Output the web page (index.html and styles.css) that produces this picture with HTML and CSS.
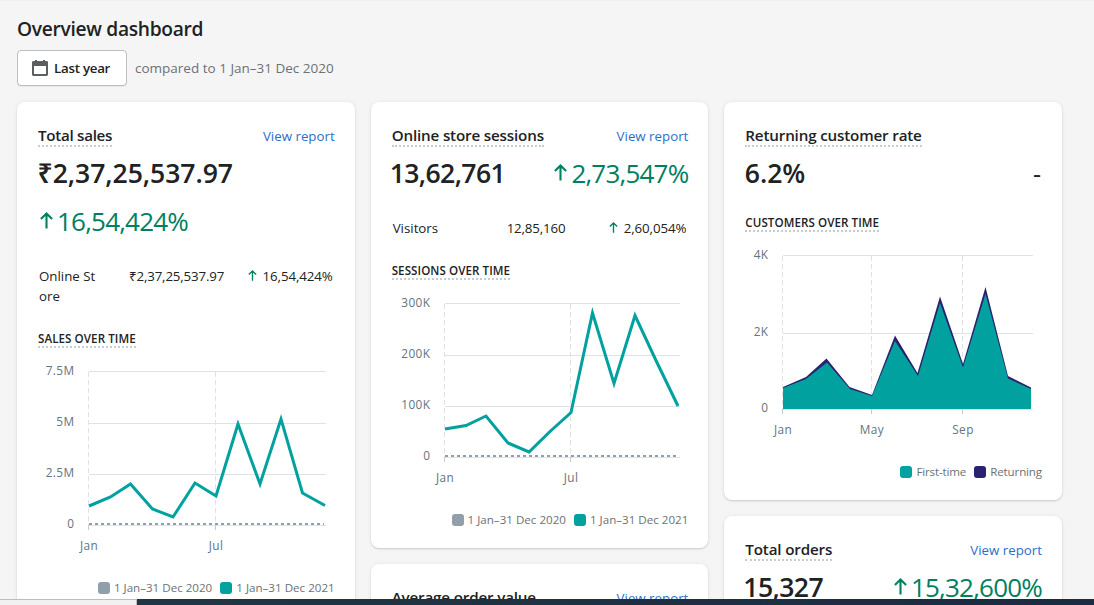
FILE: index.html
```
<!DOCTYPE html>
<html lang="en">
<head>
  <meta charset="UTF-8" />
  <meta name="viewport" content="width=device-width, initial-scale=1.0"/>
  <title>Overview dashboard</title>
  <link rel="stylesheet" href="styles.css">
</head>
<body>
  <svg class="defs">
    <symbol id="arrow-up" viewBox="0 0 13 17">
      <path d="M6.5 16.5V2M0.9 7.1l5.6-5.6 5.6 5.6" fill="none" stroke="currentColor" stroke-width="2.1"/>
    </symbol>
  </svg>

  <div class="page">
    <h1>Overview dashboard</h1>
    <div class="toolbar">
      <button class="btn-date" type="button">
        <svg class="icon-calendar" viewBox="0 0 16 16">
          <path d="M3 0h2v1h6V0h2v1h1.6A1.4 1.4 0 0 1 16 2.4v12.2a1.4 1.4 0 0 1-1.4 1.4H1.4A1.4 1.4 0 0 1 0 14.6V2.4A1.4 1.4 0 0 1 1.4 1H3zM2 6v8h12V6z" fill="#5c5f62" fill-rule="evenodd"/>
        </svg>
        <span>Last year</span>
      </button>
      <span class="compare">compared to 1 Jan–31 Dec 2020</span>
    </div>

    <div class="columns">
      <div class="column">
        <section class="card card-sales">
          <div class="card-header">
            <h2>Total sales</h2>
            <a class="link">View report</a>
          </div>
          <div class="metric"><span class="value value-wide">₹2,37,25,537.97</span></div>
          <div class="metric metric-second">
            <span class="growth"><svg class="arrow"><use href="#arrow-up"/></svg>16,54,424%</span>
          </div>
          <div class="row">
            <span class="row-name">Online St<br>ore</span>
            <span class="row-value">₹2,37,25,537.97</span>
            <span class="row-growth"><svg class="arrow-small"><use href="#arrow-up"/></svg>16,54,424%</span>
          </div>
          <h3>Sales over time</h3>
          <svg class="chart" width="296" height="200" viewBox="0 0 296 200">
            <g class="grid">
              <path d="M51 15.5h237M51 67.5h237M51 118.5h237M51 169.5h237"/>
              <path class="vertical" d="M50.5 16v153M177.5 16v153"/>
              <path class="tick" d="M50.5 169v5M177.5 169v5"/>
            </g>
            <g class="axis axis-y">
              <text x="36.5" y="19">7.5M</text>
              <text x="36.5" y="70">5M</text>
              <text x="36.5" y="121">2.5M</text>
              <text x="36.5" y="172">0</text>
            </g>
            <g class="axis axis-x">
              <text x="51" y="194">Jan</text>
              <text x="178" y="194">Jul</text>
            </g>
            <path class="line-previous" d="M51 168h235"/>
            <polyline class="line" points="51,150 72.5,141 92.5,128 114.5,153 135,161 157,127 178,140 200,68 222,128 243,63 264.5,137 287,149.5"/>
          </svg>
          <div class="legend">
            <span class="key key-grey"></span><span>1 Jan–31 Dec 2020</span>
            <span class="key key-teal"></span><span>1 Jan–31 Dec 2021</span>
          </div>
        </section>
      </div>

      <div class="column">
        <section class="card card-sessions">
          <div class="card-header">
            <h2>Online store sessions</h2>
            <a class="link">View report</a>
          </div>
          <div class="metric">
            <span class="value">13,62,761</span>
            <span class="growth"><svg class="arrow"><use href="#arrow-up"/></svg>2,73,547%</span>
          </div>
          <div class="row">
            <span class="row-name">Visitors</span>
            <span class="row-value">12,85,160</span>
            <span class="row-growth"><svg class="arrow-small"><use href="#arrow-up"/></svg>2,60,054%</span>
          </div>
          <h3>Sessions over time</h3>
          <svg class="chart" width="296" height="200" viewBox="0 0 296 200">
            <g class="grid">
              <path d="M53 15.5h235M53 67.5h235M53 118.5h235M53 169.5h235"/>
              <path class="vertical" d="M52.5 16v153M178.5 16v153"/>
              <path class="tick" d="M52.5 169v5M178.5 169v5"/>
            </g>
            <g class="axis axis-y">
              <text x="38.3" y="19">300K</text>
              <text x="38.3" y="70">200K</text>
              <text x="38.3" y="121">100K</text>
              <text x="38.3" y="172">0</text>
            </g>
            <g class="axis axis-x">
              <text x="53" y="194">Jan</text>
              <text x="179" y="194">Jul</text>
            </g>
            <path class="line-previous" d="M53 168h232"/>
            <polyline class="line" points="53,141 74,137.5 94,128 116,155 137,164 158,143.5 179,124.5 200.5,25 222,95.5 243,27.5 264,72.5 286,118"/>
          </svg>
          <div class="legend">
            <span class="key key-grey"></span><span>1 Jan–31 Dec 2020</span>
            <span class="key key-teal"></span><span>1 Jan–31 Dec 2021</span>
          </div>
        </section>

        <section class="card">
          <div class="card-header">
            <h2>Average order value</h2>
            <a class="link">View report</a>
          </div>
        </section>
      </div>

      <div class="column">
        <section class="card card-customers">
          <div class="card-header">
            <h2>Returning customer rate</h2>
          </div>
          <div class="metric">
            <span class="value value-wide">6.2%</span>
            <span class="no-change">-</span>
          </div>
          <h3>Customers over time</h3>
          <svg class="chart" width="296" height="200" viewBox="0 0 296 200">
            <g class="grid">
              <path d="M38 15.5h250M38 93.5h250M38 169.5h250"/>
              <path class="vertical" d="M37.5 16v153M126.5 16v153M217.5 16v153"/>
              <path class="tick" d="M37.5 169v5M126.5 169v5M217.5 169v5"/>
            </g>
            <g class="axis axis-y">
              <text x="23.5" y="19">4K</text>
              <text x="23.5" y="96">2K</text>
              <text x="23.5" y="172">0</text>
            </g>
            <g class="axis axis-x">
              <text x="38" y="194">Jan</text>
              <text x="127" y="194">May</text>
              <text x="218" y="194">Sep</text>
            </g>
            <polygon class="area-returning" points="38,169 38,147 61,137 81.5,118.5 104.5,147 127,155 150,95.5 172.5,133 195,56.5 218,124 240.5,47 263,136 286,147.5 286,149 286,169"/>
            <polygon class="area-first" points="38,169 38,148 61,139 82,122.5 105,149 127,156 150,101 173,136 195,63 218,127.5 240.5,54 263,138.5 286,149 286,169"/>
          </svg>
          <div class="legend">
            <span class="key key-teal"></span><span>First-time</span>
            <span class="key key-navy"></span><span>Returning</span>
          </div>
        </section>

        <section class="card">
          <div class="card-header">
            <h2>Total orders</h2>
            <a class="link">View report</a>
          </div>
          <div class="metric">
            <span class="value">15,327</span>
            <span class="growth"><svg class="arrow"><use href="#arrow-up"/></svg>15,32,600%</span>
          </div>
        </section>
      </div>
    </div>
  </div>

  <div class="bottom-bar">
    <div class="status"></div>
  </div>
</body>
</html>
```
FILE: styles.css
```
* {
  box-sizing: border-box;
}

body {
  margin: 0;
  height: 605px;
  overflow: hidden;
  background: #f5f5f5;
  color: #202223;
  font-family: "Open Sans", "Noto Sans", sans-serif;
  font-size: 13.3px;
  line-height: 20px;
}

.defs {
  display: none;
}

.page {
  padding: 14px 32px 0 17px;
  border-top: 1px solid #f0f0f0;
}

h1, h2, h3 {
  margin: 0;
  font-weight: 600;
}

h1 {
  font-size: 19.2px;
  line-height: 28px;
  letter-spacing: -0.3px;
}

.toolbar {
  display: flex;
  align-items: center;
  gap: 8px;
  margin-top: 7px;
}

.btn-date {
  display: flex;
  align-items: center;
  gap: 6px;
  width: 110px;
  height: 36px;
  padding: 0 0 0 14px;
  background: #fff;
  border: 1px solid #babfc3;
  border-radius: 4px;
  box-shadow: 0 1px 0 rgba(0, 0, 0, 0.05);
  color: #202223;
  font: 600 13.3px "Open Sans", sans-serif;
  letter-spacing: -0.25px;
  white-space: nowrap;
}

.icon-calendar {
  width: 16px;
  height: 16px;
}

.compare {
  color: #6d7175;
  font-size: 13.5px;
}

.columns {
  display: grid;
  grid-template-columns: repeat(3, minmax(0, 1fr));
  gap: 16px;
  margin-top: 16px;
}

.column {
  display: flex;
  flex-direction: column;
  gap: 16px;
}

.card {
  background: #fff;
  padding: 24px 20px 20px 21px;
  border-radius: 8px;
  box-shadow: 0 0 5px rgba(23, 24, 24, 0.05), 0 1px 2px rgba(0, 0, 0, 0.15);
}

.card-header {
  display: flex;
  justify-content: space-between;
  align-items: flex-start;
}

h2 {
  font-size: 15.2px;
  line-height: 18px;
  height: 21px;
  letter-spacing: -0.17px;
  border-bottom: 2px dotted #c4cdd5;
}

.card-sales h2 {
  letter-spacing: -0.3px;
}

.link {
  color: #2c6ecb;
}

.metric {
  display: flex;
  justify-content: space-between;
  align-items: center;
  height: 32px;
  margin-top: 10px;
  font-size: 26.6px;
  line-height: 32px;
}

.metric-second {
  margin-top: 16px;
}

.value {
  margin-left: -2px;
  font-weight: 600;
  letter-spacing: -0.6px;
}

.value-wide {
  margin-left: -0.5px;
  letter-spacing: -0.05px;
}

.growth {
  display: flex;
  align-items: center;
  height: 30px;
  color: #008060;
  font-size: 26px;
  line-height: 30px;
  letter-spacing: -0.8px;
}

.arrow {
  width: 13px;
  height: 17px;
  margin: 0 4px 1px 2px;
}

.no-change {
  margin-right: 1px;
  font-size: 25px;
}

.row {
  display: grid;
  grid-template-columns: 90px auto 1fr;
  margin-top: 29px;
  padding: 0 2px 0 1px;
}

.row-value {
  letter-spacing: -0.15px;
}

.card-sessions .row {
  grid-template-columns: 114px auto 1fr;
}

.row-growth {
  text-align: right;
  letter-spacing: -0.1px;
}

.arrow-small {
  width: 9px;
  height: 11px;
  margin-right: 6px;
  color: #008060;
}

h3 {
  width: max-content;
  height: 18px;
  margin-top: 24px;
  font-size: 11.6px;
  line-height: 17px;
  letter-spacing: 0.07px;
  text-transform: uppercase;
  border-bottom: 2px dotted #c4cdd5;
}

.card-customers h3 {
  margin-top: 25px;
}

.chart {
  display: block;
  margin-top: 8px;
}

.grid path {
  fill: none;
  stroke: #dfe3e8;
}

.grid .vertical {
  stroke-dasharray: 5 3;
}

.grid .tick {
  stroke: #c4cdd5;
}

.axis text {
  font-size: 11.8px;
  letter-spacing: 0.4px;
  fill: #637381;
}

.axis-y text {
  text-anchor: end;
}

.axis-x text {
  text-anchor: middle;
}

.line {
  fill: none;
  stroke: #00a19f;
  stroke-width: 3;
}

.line-previous {
  stroke: #919eab;
  stroke-width: 2;
  stroke-dasharray: 3 3;
}

.area-returning {
  fill: #2a226f;
}

.area-first {
  fill: #00a19f;
}

.legend {
  display: flex;
  justify-content: flex-end;
  align-items: center;
  height: 16px;
  margin-top: 24px;
  color: #6d7175;
  font-size: 11.6px;
  line-height: 16px;
}

.card-customers .legend {
  letter-spacing: -0.15px;
}

.key {
  width: 12px;
  height: 12px;
  margin: 0 4px 0 8px;
  border-radius: 3px;
}

.key-grey {
  background: #919eab;
}

.key-teal {
  background: #00a19f;
}

.key-navy {
  background: #2a226f;
}

/* window edge along the bottom */
.bottom-bar {
  position: absolute;
  left: 0;
  right: 0;
  bottom: 0;
  height: 6px;
  background: linear-gradient(to right, #213843, #1b2b40);
}

.status {
  width: 137px;
  height: 6px;
  background: #f1f1f1;
  border-top: 1px solid #bdbdbd;
  border-right: 1px solid #bdbdbd;
}
```
